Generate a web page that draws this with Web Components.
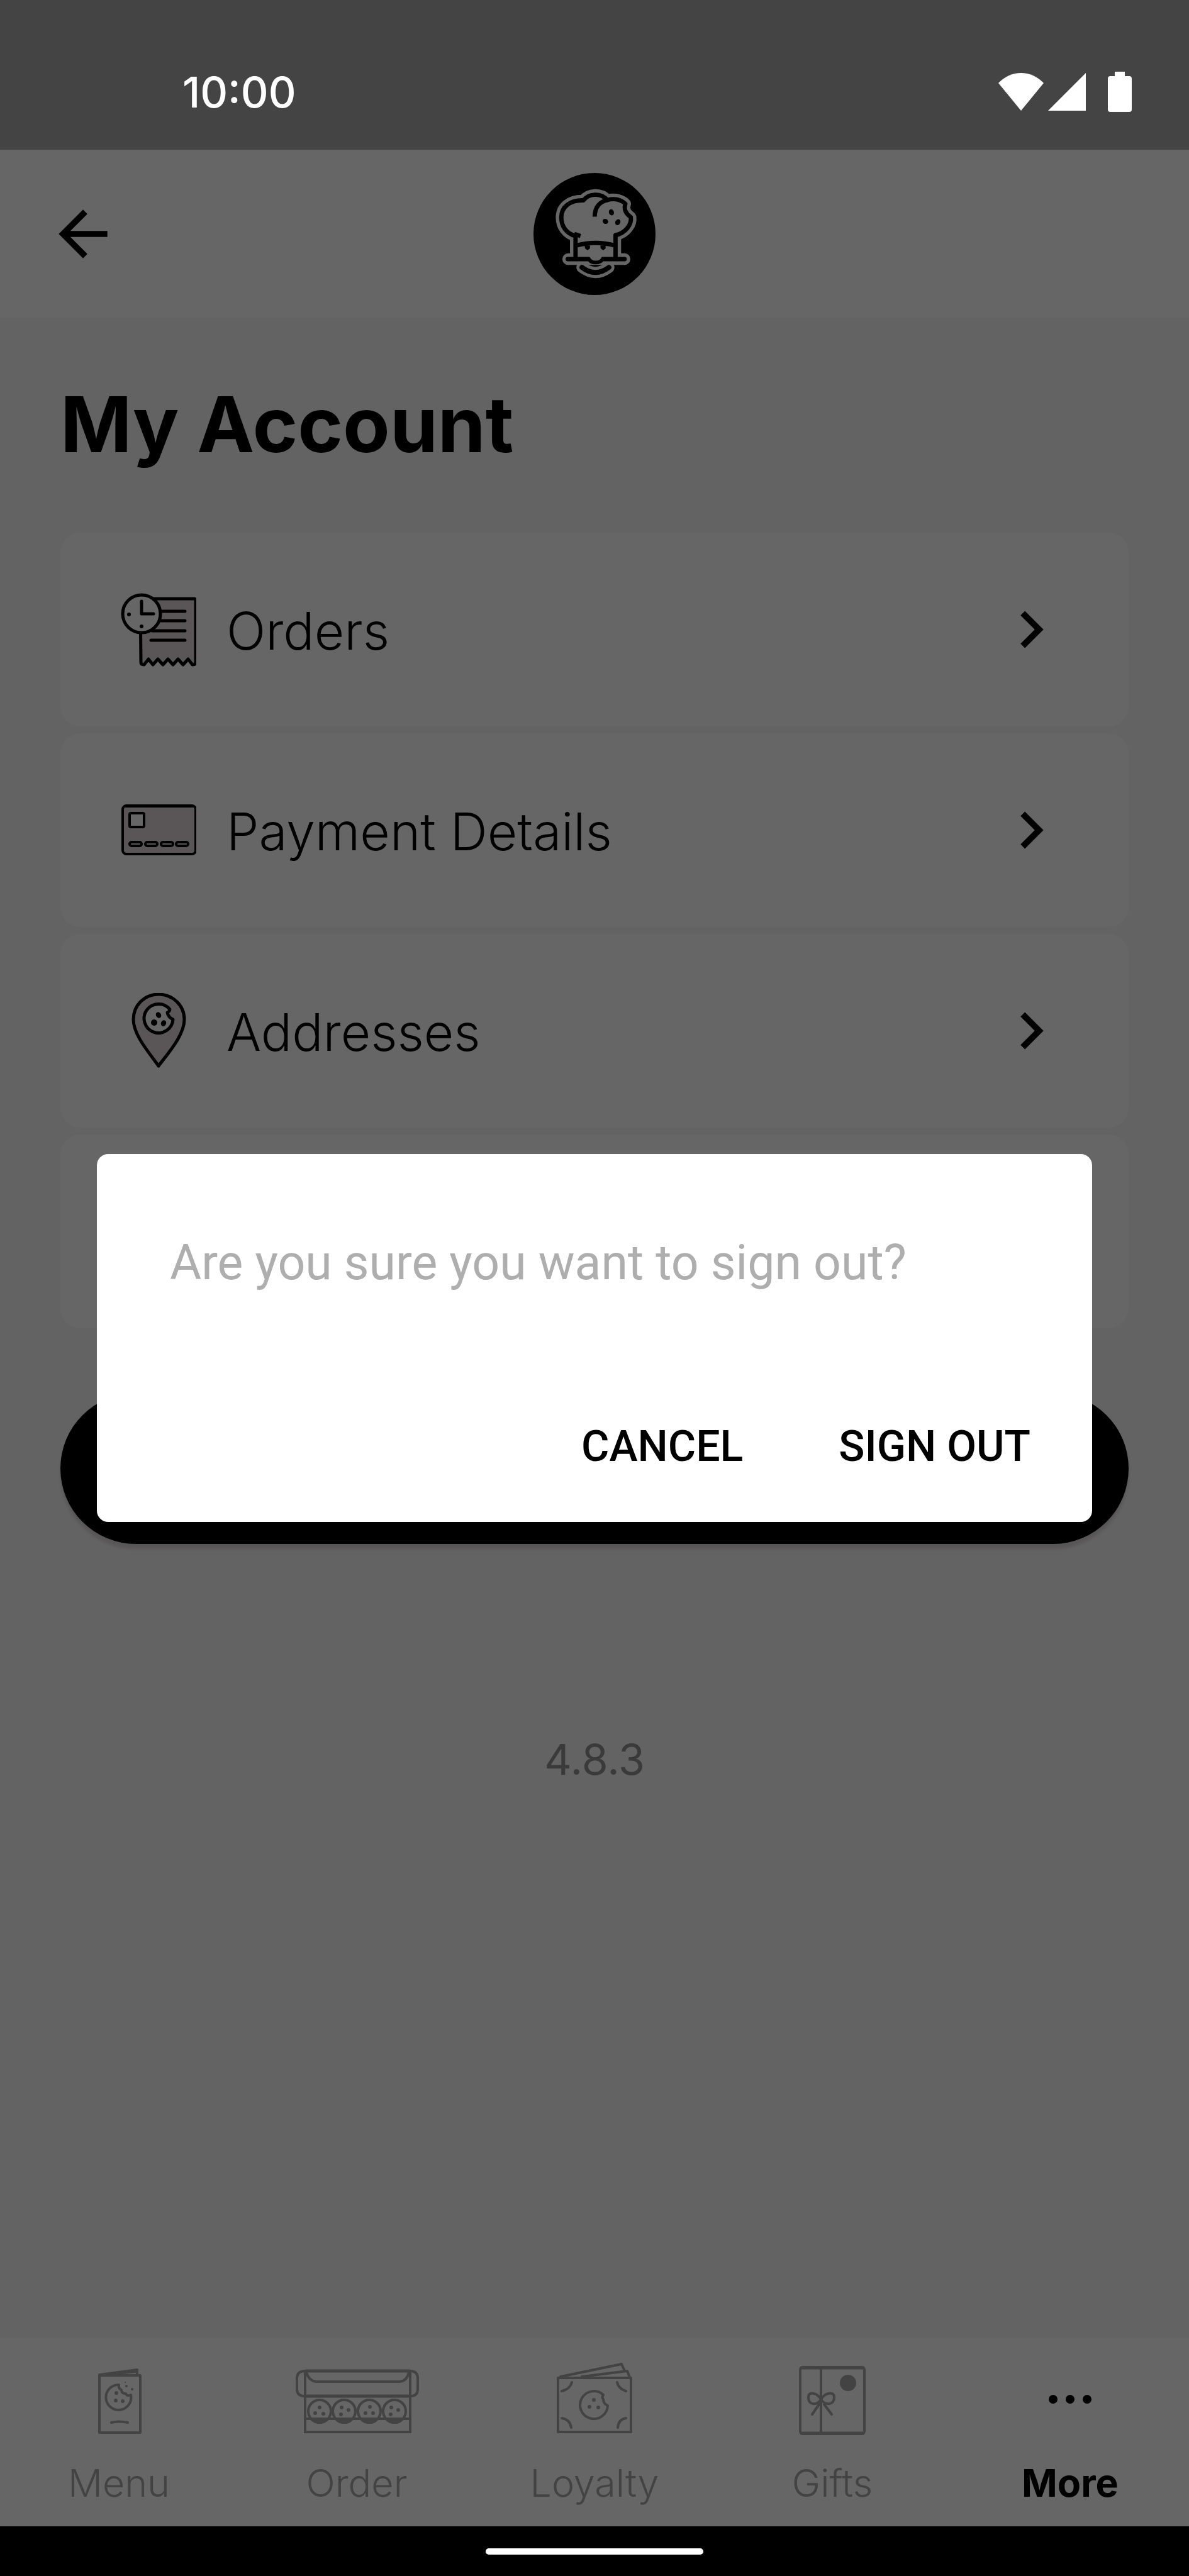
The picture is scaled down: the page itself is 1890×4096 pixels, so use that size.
<!DOCTYPE html>
<html lang="en">
<head>
<meta charset="UTF-8">
<meta name="viewport" content="width=device-width, initial-scale=1">
<title>My Account</title>
<style>
    body {
        margin: 0;
        background-color: #000;
        color: #000;
        font-family: Inter, sans-serif;
    }
</style>
</head>
<body>

<account-screen>
    <status-bar slot="status">10:00</status-bar>
    <app-header slot="header"></app-header>

    <h1 slot="title">My Account</h1>
    <account-row icon="orders">Orders</account-row>
    <account-row icon="card">Payment Details</account-row>
    <account-row icon="pin">Addresses</account-row>
    <account-row></account-row>
    <span slot="version">4.8.3</span>

    <tab-bar slot="tabs">
        <tab-item icon="menu">Menu</tab-item>
        <tab-item icon="box">Order</tab-item>
        <tab-item icon="loyalty">Loyalty</tab-item>
        <tab-item icon="gift">Gifts</tab-item>
        <tab-item icon="more" active>More</tab-item>
    </tab-bar>
    <system-nav slot="nav"></system-nav>

    <confirm-dialog slot="dialog">
        Are you sure you want to sign out?
        <span slot="cancel">CANCEL</span>
        <span slot="confirm">SIGN OUT</span>
    </confirm-dialog>
</account-screen>

<script>
// [viewBox, markup]
const ICONS = {
    wifi: ['0 0 72 60', `<path fill="currentColor" d="M0 16Q16 0 36 0T72 16L36 60z"/>`],
    signal: ['0 0 60 60', `<path fill="currentColor" d="M60 0v60H0z"/>`],
    battery: ['0 0 38 64', `<path fill="currentColor" d="M11 0h16v7h7q4 0 4 4v49q0 4-4 4H4q-4 0-4-4V11q0-4 4-4h7z"/>`],
    back: ['0 0 24 24', `<path fill="currentColor" d="M20 11H7.83l5.59-5.59L12 4l-8 8 8 8 1.41-1.41L7.83 13H20z"/>`],
    chevron: ['0 0 24 24', `<path fill="currentColor" d="M8.59 16.59 13.17 12 8.59 7.41 10 6l6 6-6 6z"/>`],
    logo: ['66 56 592 592', `
        <circle cx="362" cy="352" r="296"/>
        <g fill="none" stroke="#fff" stroke-linecap="round" stroke-linejoin="round">
            <path stroke-width="54" d="M270 472V362C226 350 201 315 201 272C201 222 242 187 308 189C335 155 392 151 424 187C460 178 492 186 512 206C502 232 516 256 538 270C544 306 512 348 464 358V472"/>
            <path stroke-width="56" d="M234 474H508"/>
            <path stroke-width="54" d="M301 514Q366 564 432 514"/>
        </g>
        <g fill="none" stroke="#000" stroke-width="21" stroke-linejoin="round">
            <path fill="#fff" d="M270 472V362C226 350 201 315 201 272C201 222 242 187 308 189C335 155 392 151 424 187C460 178 492 186 512 206C502 232 516 256 538 270C544 306 512 348 464 358V472"/>
            <path d="M264 352L294 362M363 268C363 220 390 193 428 187M278 407Q366 384 458 407"/>
            <path stroke-linecap="round" d="M232 474H336C348 494 386 494 400 474H508"/>
            <path stroke-width="24" stroke-linecap="round" d="M301 514Q366 564 432 514"/>
        </g>
        <path fill="#fff" d="M338 460Q368 446 398 460Q392 482 368 482Q346 482 338 460z"/>
        <path d="M314 408h26v14l-12 9-12-9zM390 408h26v14l-12 9-12-9z"/>
        <ellipse cx="444" cy="247" rx="12" ry="15" transform="rotate(-20 444 247)"/>
        <ellipse cx="415" cy="291" rx="14" ry="12" transform="rotate(30 415 291)"/>
        <ellipse cx="475" cy="295" rx="12" ry="15" transform="rotate(30 475 295)"/>`],
    orders: ['0 0 120 120', `
        <g fill="none" stroke="currentColor" stroke-width="5" stroke-linecap="round" stroke-linejoin="round">
            <path fill="#e1d7da" d="M31 11H116q3 0 3 3V112q0 4-5 4l-7-9-8 9-8-9-8 9-8-9-8 9-8-9-8 9-7-9-7 9q-5 0-5-4z"/>
            <path d="M60 31h42M60 46h42M50 62h52M48 77h54"/>
            <circle cx="33" cy="35" r="30" fill="#fff"/>
            <path d="M33 15v20h19"/>
        </g>
        <circle cx="13" cy="36" r="3"/><circle cx="33" cy="55" r="3"/>`],
    card: ['0 0 120 120', `
        <g fill="none" stroke="currentColor" stroke-width="4">
            <rect x="3" y="21" width="116" height="77" rx="6" fill="#e1d7da"/>
            <path d="M5 22h112"/>
            <rect x="14" y="33" width="23" height="22" rx="2" fill="#fff"/>
            <rect x="14" y="79" width="19" height="6" rx="3"/>
            <rect x="39" y="79" width="19" height="6" rx="3"/>
            <rect x="64" y="79" width="19" height="6" rx="3"/>
            <rect x="88" y="79" width="19" height="6" rx="3"/>
        </g>`],
    pin: ['0 0 120 120', `
        <g stroke="currentColor" stroke-width="5" stroke-linejoin="round">
            <path fill="#e1d7da" d="M60 116C48 98 20 68 20 42C20 19 38 2 60 2S101 19 101 42C101 68 73 98 60 116z"/>
            <path fill="#fff" d="M78 26A23 23 0 1 0 83 42Q75 38 74 31Q77 30 78 26z"/>
        </g>
        <ellipse cx="60" cy="35" rx="4" ry="5" transform="rotate(-30 60 35)"/>
        <circle cx="53" cy="47" r="5"/>
        <ellipse cx="68" cy="48" rx="4" ry="5" transform="rotate(25 68 48)"/>`],
    menu: ['0 0 200 120', `
        <g fill="none" stroke="currentColor" stroke-width="4" stroke-linejoin="round" stroke-linecap="round">
            <path d="M69 22H134V113H69zM69 21L129 13V21M86 20L127 16M88 97Q100 94 114 97"/>
            <path d="M100 37A20 20 0 1 0 119 53Q113 56 111 51Q104 51 104 45Q99 43 100 37z"/>
        </g>
        <g fill="currentColor">
            <circle cx="96" cy="50" r="3"/><circle cx="95" cy="62" r="3"/><circle cx="106" cy="63" r="3"/>
            <circle cx="112" cy="39" r="2"/><circle cx="121" cy="44" r="2"/><circle cx="110" cy="33" r="1"/>
        </g>`],
    box: ['0 0 200 120', `
        <g fill="none" stroke="currentColor" stroke-width="4">
            <path stroke-width="5" d="M18 15H185M18 55H185"/>
            <path d="M18 15Q5 15 5 27V44Q5 55 18 55M185 15Q197 15 197 27V44Q197 55 185 55"/>
            <path d="M18 13V112H185V13M20 17Q24 31 36 32H168Q180 31 183 17M18 91H185"/>
            <circle cx="41" cy="79" r="18"/><circle cx="80" cy="79" r="18"/>
            <circle cx="120" cy="79" r="18"/><circle cx="160" cy="79" r="18"/>
        </g>
        <g fill="currentColor">
            <path d="M25 90h32q-6 9-16 9t-16-9zM64 90h32q-6 9-16 9t-16-9zM104 90h32q-6 9-16 9t-16-9zM144 90h32q-6 9-16 9t-16-9z"/>
            <circle cx="41" cy="73" r="3"/><circle cx="34" cy="82" r="3"/><circle cx="47" cy="83" r="3"/>
            <circle cx="76" cy="73" r="3"/><circle cx="87" cy="77" r="3"/><circle cx="75" cy="84" r="3"/>
            <circle cx="121" cy="72" r="3"/><circle cx="114" cy="82" r="3"/><circle cx="126" cy="82" r="3"/>
            <circle cx="155" cy="73" r="3"/><circle cx="166" cy="77" r="3"/><circle cx="154" cy="84" r="3"/>
        </g>`],
    loyalty: ['0 0 200 120', `
        <g fill="none" stroke="currentColor" stroke-width="4" stroke-linejoin="round" stroke-linecap="round">
            <path d="M42 26H158V112H42zM46 24L143 4L148 15M80 24L152 15L156 25"/>
            <path d="M64 33Q61 44 48 47M136 33Q138 43 150 47M48 90Q61 92 63 105M150 90Q138 92 137 105"/>
            <path d="M114 53A22 22 0 1 0 121 70Q114 67 114 60Q111 57 114 53z"/>
        </g>
        <g fill="currentColor">
            <circle cx="99" cy="61" r="3"/><circle cx="92" cy="72" r="3"/><circle cx="106" cy="73" r="3"/>
        </g>`],
    gift: ['0 0 200 120', `
        <g fill="none" stroke="currentColor" stroke-width="4" stroke-linejoin="round" stroke-linecap="round">
            <rect x="49" y="9" width="102" height="106" rx="4"/>
            <path d="M51 10H149M51 114H149" stroke-width="5"/>
            <path d="M82 10V114M82 60C76 50 62 46 62 57C62 70 76 70 82 60C88 50 103 46 103 57C103 70 88 70 82 60zM79 68L68 84M87 68L99 84"/>
        </g>
        <circle cx="125" cy="34" r="13" fill="currentColor"/>`],
    more: ['0 0 200 120', `
        <g fill="currentColor">
            <circle cx="73" cy="60" r="7"/><circle cx="100" cy="60" r="7"/><circle cx="127" cy="60" r="7"/>
        </g>`]
};

/* draws one of the icons above, sized by its user */
class AppIcon extends HTMLElement {
    constructor() {
        super();
        this.attachShadow({ mode: 'open' });
    }

    connectedCallback() {
        const [box, markup] = ICONS[this.getAttribute('name')];
        this.shadowRoot.innerHTML = `
            <style>
                :host { display: block; flex: none; }
                svg { display: block; width: 100%; height: 100%; }
            </style>
            <svg viewBox="${box}" aria-hidden="true">${markup}</svg>
        `;
    }
}

class StatusBar extends HTMLElement {
    constructor() {
        super();
        this.attachShadow({ mode: 'open' });
        this.shadowRoot.innerHTML = `
            <style>
                :host {
                    display: flex;
                    align-items: center;
                    box-sizing: border-box;
                    height: 238px;
                    padding: 54px 91px 0 290px;
                    background-color: #444;
                    color: #fff;
                    font-size: 68px;
                    font-weight: 500;
                    line-height: 80px;
                }
                .time { flex: 1; }
                .icons { display: flex; align-items: center; }
                .wifi { width: 72px; height: 60px; margin-right: 7px; }
                .signal { width: 60px; height: 60px; margin-right: 35px; }
                .battery { width: 38px; height: 64px; }
            </style>
            <span class="time"><slot></slot></span>
            <div class="icons">
                <app-icon class="wifi" name="wifi"></app-icon>
                <app-icon class="signal" name="signal"></app-icon>
                <app-icon class="battery" name="battery"></app-icon>
            </div>
        `;
    }
}

class AppHeader extends HTMLElement {
    constructor() {
        super();
        this.attachShadow({ mode: 'open' });
        this.shadowRoot.innerHTML = `
            <style>
                :host {
                    display: grid;
                    grid-template-columns: 1fr auto 1fr;
                    align-items: center;
                    height: 267px;
                    padding: 0 74px;
                    background-color: #fff;
                }
                button {
                    justify-self: start;
                    padding: 0;
                    border: 0;
                    background: none;
                    color: inherit;
                }
                .back { width: 116px; height: 116px; }
                .logo { width: 194px; height: 194px; }
            </style>
            <button type="button" aria-label="Back"><app-icon class="back" name="back"></app-icon></button>
            <app-icon class="logo" name="logo"></app-icon>
        `;
    }
}

class AccountRow extends HTMLElement {
    constructor() {
        super();
        this.attachShadow({ mode: 'open' });
    }

    connectedCallback() {
        const icon = this.getAttribute('icon');

        this.shadowRoot.innerHTML = `
            <style>
                :host { display: block; }
                a {
                    display: flex;
                    align-items: center;
                    gap: 48px;
                    height: 308px;
                    padding: 0 96px;
                    border-radius: 32px;
                    background-color: #fff;
                    color: inherit;
                    font-size: 82px;
                    font-weight: 300;
                    line-height: 96px;
                    text-decoration: none;
                }
                .label { flex: 1; padding-top: 6px; }
                .icon { width: 120px; height: 120px; }
                .chevron { width: 118px; height: 118px; }
            </style>
            <a href="#">
                ${icon ? `
                    <app-icon class="icon" name="${icon}"></app-icon>
                    <span class="label"><slot></slot></span>
                    <app-icon class="chevron" name="chevron"></app-icon>
                ` : ''}
            </a>
        `;
    }
}

class TabBar extends HTMLElement {
    constructor() {
        super();
        this.attachShadow({ mode: 'open' });
        this.shadowRoot.innerHTML = `
            <style>
                :host { display: block; background-color: #fff; }
                nav {
                    display: grid;
                    grid-template-columns: repeat(5, 1fr);
                    padding: 38px 0 34px;
                }
            </style>
            <nav><slot></slot></nav>
        `;
    }
}

class TabItem extends HTMLElement {
    constructor() {
        super();
        this.attachShadow({ mode: 'open' });
    }

    connectedCallback() {
        this.shadowRoot.innerHTML = `
            <style>
                :host { display: block; color: #a8a8a8; font-weight: 300; }
                :host([active]) { color: #000; font-weight: 700; }
                a {
                    display: flex;
                    flex-direction: column;
                    align-items: center;
                    gap: 38px;
                    color: inherit;
                    font-size: 61px;
                    line-height: 70px;
                    text-decoration: none;
                }
                app-icon { width: 200px; height: 120px; }
            </style>
            <a href="#">
                <app-icon name="${this.getAttribute('icon')}"></app-icon>
                <span><slot></slot></span>
            </a>
        `;
    }
}

class SystemNav extends HTMLElement {
    constructor() {
        super();
        this.attachShadow({ mode: 'open' });
        this.shadowRoot.innerHTML = `
            <style>
                :host {
                    display: flex;
                    align-items: center;
                    justify-content: center;
                    height: 79px;
                    background-color: #000;
                }
                .handle {
                    width: 346px;
                    height: 10px;
                    border-radius: 5px;
                    background-color: #fff;
                }
            </style>
            <div class="handle"></div>
        `;
    }
}

class ConfirmDialog extends HTMLElement {
    constructor() {
        super();
        this.attachShadow({ mode: 'open' });
        this.shadowRoot.innerHTML = `
            <style>
                /* the scrim; the padding keeps the box centred between the system bars */
                :host {
                    position: absolute;
                    inset: 0;
                    display: flex;
                    align-items: center;
                    box-sizing: border-box;
                    padding: 238px 154px 79px;
                    background-color: rgba(0, 0, 0, .6);
                    font-family: Roboto, sans-serif;
                }
                .box {
                    flex: 1;
                    padding: 128px 98px 80px 116px;
                    border-radius: 18px;
                    background-color: #fff;
                }
                p {
                    margin: 0 0 207px;
                    color: #aeaeae;
                    font-size: 77px;
                    line-height: 90px;
                }
                .actions {
                    display: flex;
                    justify-content: flex-end;
                    gap: 152px;
                }
                button {
                    padding: 0;
                    border: 0;
                    background: none;
                    color: #000;
                    font: 500 68px/80px Roboto, sans-serif;
                }
            </style>
            <div class="box" role="alertdialog" aria-modal="true" aria-describedby="message">
                <p id="message"><slot></slot></p>
                <div class="actions">
                    <button type="button"><slot name="cancel"></slot></button>
                    <button type="button"><slot name="confirm"></slot></button>
                </div>
            </div>
        `;
    }
}

class AccountScreen extends HTMLElement {
    constructor() {
        super();
        this.attachShadow({ mode: 'open' });
        this.shadowRoot.innerHTML = `
            <style>
                :host {
                    position: relative;
                    display: flex;
                    flex-direction: column;
                    min-height: 100vh;
                    background-color: #f7f7f7;
                }
                main {
                    flex: 1;
                    padding: 100px 96px;
                }
                ::slotted(h1) {
                    margin: 0 0 102px;
                    font-size: 122px;
                    line-height: 140px;
                    font-weight: 700;
                }
                .list {
                    display: flex;
                    flex-direction: column;
                    gap: 11px;
                }
                .sign-out {
                    display: block;
                    width: 100%;
                    height: 240px;
                    margin-top: 103px;
                    border: 0;
                    border-radius: 120px;
                    background-color: #000;
                    box-shadow: 0 8px 4px #dfd7d9;
                }
                .version {
                    margin-top: 302px;
                    color: #929292;
                    font-size: 68px;
                    line-height: 80px;
                    text-align: center;
                }
                /* the status bar and the home handle are not dimmed */
                .system { position: relative; z-index: 1; }
            </style>
            <div class="system"><slot name="status"></slot></div>
            <slot name="header"></slot>
            <main>
                <slot name="title"></slot>
                <div class="list"><slot></slot></div>
                <button class="sign-out" type="button" aria-label="Sign out"></button>
                <div class="version"><slot name="version"></slot></div>
            </main>
            <slot name="tabs"></slot>
            <div class="system"><slot name="nav"></slot></div>
            <slot name="dialog"></slot>
        `;
    }
}

customElements.define('app-icon', AppIcon);
customElements.define('status-bar', StatusBar);
customElements.define('app-header', AppHeader);
customElements.define('account-row', AccountRow);
customElements.define('tab-bar', TabBar);
customElements.define('tab-item', TabItem);
customElements.define('system-nav', SystemNav);
customElements.define('confirm-dialog', ConfirmDialog);
customElements.define('account-screen', AccountScreen);
</script>
</body>
</html>
